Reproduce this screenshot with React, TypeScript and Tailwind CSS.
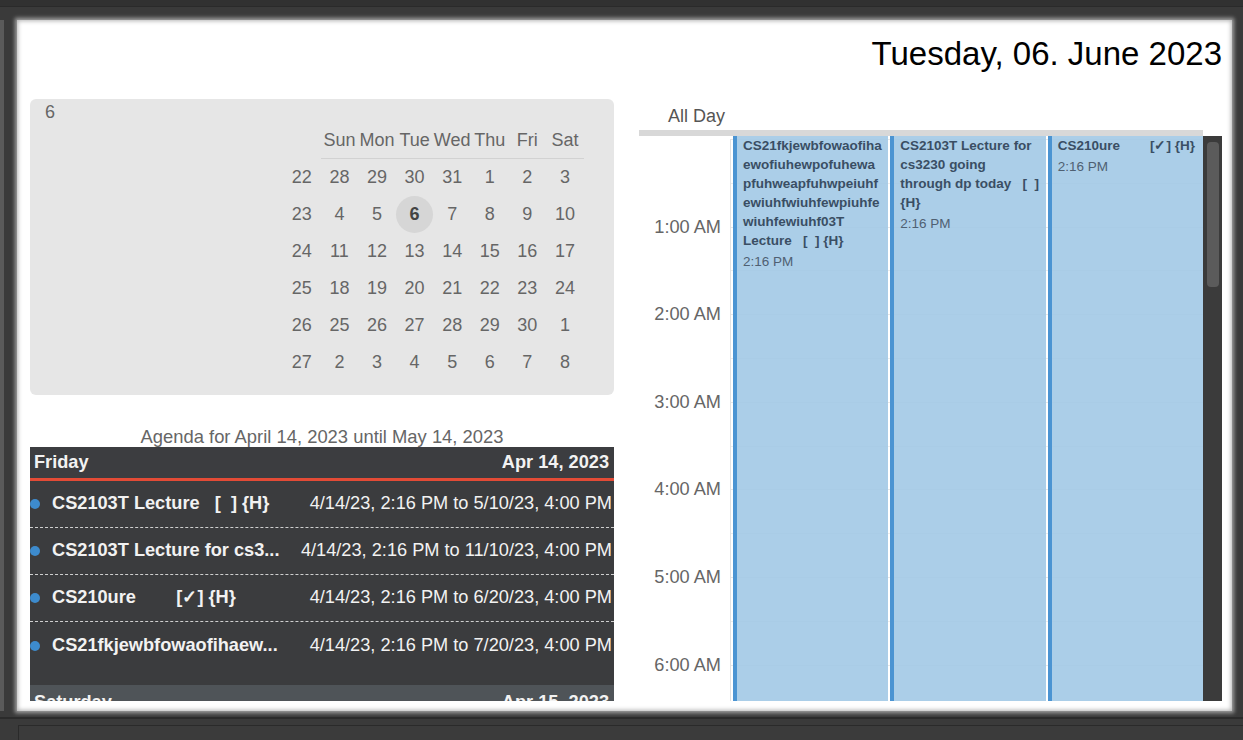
const weeks: [number, number[]][] = [
  [22, [28, 29, 30, 31, 1, 2, 3]],
  [23, [4, 5, 6, 7, 8, 9, 10]],
  [24, [11, 12, 13, 14, 15, 16, 17]],
  [25, [18, 19, 20, 21, 22, 23, 24]],
  [26, [25, 26, 27, 28, 29, 30, 1]],
  [27, [2, 3, 4, 5, 6, 7, 8]],
];

const dayNames = ["Sun", "Mon", "Tue", "Wed", "Thu", "Fri", "Sat"];

const truncate = (s: string, n: number) => (s.length > n ? s.slice(0, n) + "..." : s);

// max = chars shown before "..." (agenda title column is narrow)
const agendaItems = [
  { title: "CS2103T Lecture   [  ] {H}", max: 40, range: "4/14/23, 2:16 PM to 5/10/23, 4:00 PM" },
  {
    title: "CS2103T Lecture for cs3230 going through dp today   [  ] {H}",
    max: 23,
    range: "4/14/23, 2:16 PM to 11/10/23, 4:00 PM",
  },
  { title: "CS210ure        [✓] {H}", max: 40, range: "4/14/23, 2:16 PM to 6/20/23, 4:00 PM" },
  {
    title:
      "CS21fkjewbfowaofihaewofiuhewpofuhewapfuhweapfuhwpeiuhfewiuhfwiuhfewpiuhfewiuhfewiuhf03T Lecture   [  ] {H}",
    max: 21,
    range: "4/14/23, 2:16 PM to 7/20/23, 4:00 PM",
  },
];

// lines as wrapped in the day view column
const dayEvents = [
  {
    lines: [
      "CS21fkjewbfowaofiha",
      "ewofiuhewpofuhewa",
      "pfuhweapfuhwpeiuhf",
      "ewiuhfwiuhfewpiuhfe",
      "wiuhfewiuhf03T",
      "Lecture   [  ] {H}",
    ],
  },
  { lines: ["CS2103T Lecture for", "cs3230 going", "through dp today   [  ]", "{H}"] },
  { lines: ["CS210ure        [✓] {H}"] },
];

const hours = ["", "1:00 AM", "2:00 AM", "3:00 AM", "4:00 AM", "5:00 AM", "6:00 AM", "7:00 AM"];

function MiniCalendar() {
  return (
    <div className="h-[296px] rounded-md bg-[#e6e6e6] pt-[3px] text-[18px] text-[#666]">
      <div className="pl-[15px] leading-[21px]">6</div>
      <div className="ml-auto mr-[30px] w-[301px]">
        <div className="flex h-[36px]">
          <div className="w-[37.6px]" />
          <div className="flex flex-1 border-b border-[#d2d2d2]">
            {dayNames.map((d) => (
              <div key={d} className="flex w-[37.6px] items-center justify-center">
                {d}
              </div>
            ))}
          </div>
        </div>
        {weeks.map(([wk, days]) => (
          <div key={wk} className="flex h-[37px]">
            <div className="flex w-[37.6px] items-center justify-center">{wk}</div>
            {days.map((d, i) => (
              <div key={i} className="flex w-[37.6px] items-center justify-center">
                {wk === 23 && d === 6 ? (
                  <span className="flex h-[37px] w-[37px] items-center justify-center rounded-full bg-[#d6d6d6] font-bold text-[#444]">
                    {d}
                  </span>
                ) : (
                  d
                )}
              </div>
            ))}
          </div>
        ))}
      </div>
    </div>
  );
}

function Agenda() {
  return (
    <div className="flex min-h-0 flex-1 flex-col">
      <div className="mt-[31px] text-center text-[18.4px] leading-[21px] text-[#666]">
        Agenda for April 14, 2023 until May 14, 2023
      </div>
      <div className="min-h-0 flex-1 overflow-hidden text-[18.2px] text-[#f2f2f2]">
        <div className="flex h-[34px] items-center justify-between border-b-[3px] border-[#e34b36] bg-[#3c3d40] pl-[4px] pr-[5px] font-bold">
          <span>Friday</span>
          <span>Apr 14, 2023</span>
        </div>
        <div className="bg-[#3b3c3e] pb-[16px]">
          {agendaItems.map((item, i) => (
            <div
              key={i}
              className={
                i < agendaItems.length - 1
                  ? "flex h-[47px] items-center border-b border-dashed border-[#cfcfcf]"
                  : "flex h-[47px] items-center"
              }
            >
              <span className="h-[10px] w-[10px] shrink-0 rounded-full bg-[#3d8bcd]" />
              <span className="ml-[12px] whitespace-pre font-bold">{truncate(item.title, item.max)}</span>
              <span className="ml-auto whitespace-nowrap pr-[2px]">{item.range}</span>
            </div>
          ))}
        </div>
        <div className="flex h-[35px] items-center justify-between bg-[#4f5458] pl-[4px] pr-[5px] font-bold">
          <span>Saturday</span>
          <span>Apr 15, 2023</span>
        </div>
      </div>
    </div>
  );
}

function DayView() {
  return (
    <div className="flex h-full flex-col">
      <div className="h-[31px] pl-[29px] pt-[7px] text-[18px] leading-[21px] text-[#555]">All Day</div>
      <div className="mr-[19px] h-[6px] bg-[#d8d8d8]" />
      <div className="flex min-h-0 flex-1">
        <div className="relative flex-1 overflow-hidden">
          <div className="h-[3px]" />
          {hours.map((h, i) => (
            <div key={i} className="flex h-[87.6px]">
              <div className="w-[92px] border-r border-[#e3e3e3] pr-[9px] text-right text-[18.2px] leading-[21px] text-[#666]">
                {h && <div className="-translate-y-1/2">{h}</div>}
              </div>
              <div className="flex flex-1 flex-col">
                <div className="flex-1 border-t border-[#e6e6e6]" />
                <div className="flex-1 border-t border-[#ececec]" />
              </div>
            </div>
          ))}
          <div className="absolute bottom-0 left-[92px] right-0 top-0 flex">
            {dayEvents.map((ev, i) => (
              <div
                key={i}
                className="ml-[2px] flex-1 border-l-4 border-[#4b94d2] bg-[rgba(162,201,229,0.9)] pl-[6px] text-[13.5px] leading-[19px]"
              >
                <div className="whitespace-pre font-bold text-[#3a4e64]">
                  {ev.lines.map((l, j) => (
                    <div key={j}>{l}</div>
                  ))}
                </div>
                <div className="mt-[2px] text-[#4f6072]">2:16 PM</div>
              </div>
            ))}
          </div>
        </div>
        <div className="w-[19px] bg-[#3b3b3b] pl-[4px] pt-[6px]">
          <div className="h-[145px] w-[12px] rounded-[4px] bg-[#5b5b5b]" />
        </div>
      </div>
    </div>
  );
}

export default function App() {
  return (
    <div className="flex h-[740px] w-[1243px] flex-col overflow-hidden bg-[#3a3a3a] font-['Liberation_Sans',Arial,sans-serif]">
      <div className="h-[7px] shrink-0 border-b border-[#2a2a2a] bg-[#313131]" />
      <div className="flex shrink-0 pt-[13px]">
        <div className="w-[17px] shrink-0 border-l-[4px] border-[#5a5a5a]" />
        <div className="h-[691px] w-[1215px] bg-white shadow-[0_0_4px_2px_rgba(210,210,210,0.7),inset_0_0_4px_1px_rgba(0,0,0,0.3)]">
          <div className="h-[79px] pr-[10px] pt-[15px] text-right text-[33px] leading-[37px] text-black">
            Tuesday, 06. June 2023
          </div>
          <div className="flex h-[602px] gap-[25px] pl-[13px] pr-[10px]">
            <div className="flex w-[584px] shrink-0 flex-col">
              <MiniCalendar />
              <Agenda />
            </div>
            <div className="min-w-0 flex-1">
              <DayView />
            </div>
          </div>
        </div>
      </div>
      <div className="mt-[6px] h-[2px] shrink-0 bg-[#2b2b2b]" />
      <div className="ml-[18px] mt-[6px] flex-1 border-l border-t border-[#2a2a2a] bg-[#3b3b3b]" />
    </div>
  );
}
